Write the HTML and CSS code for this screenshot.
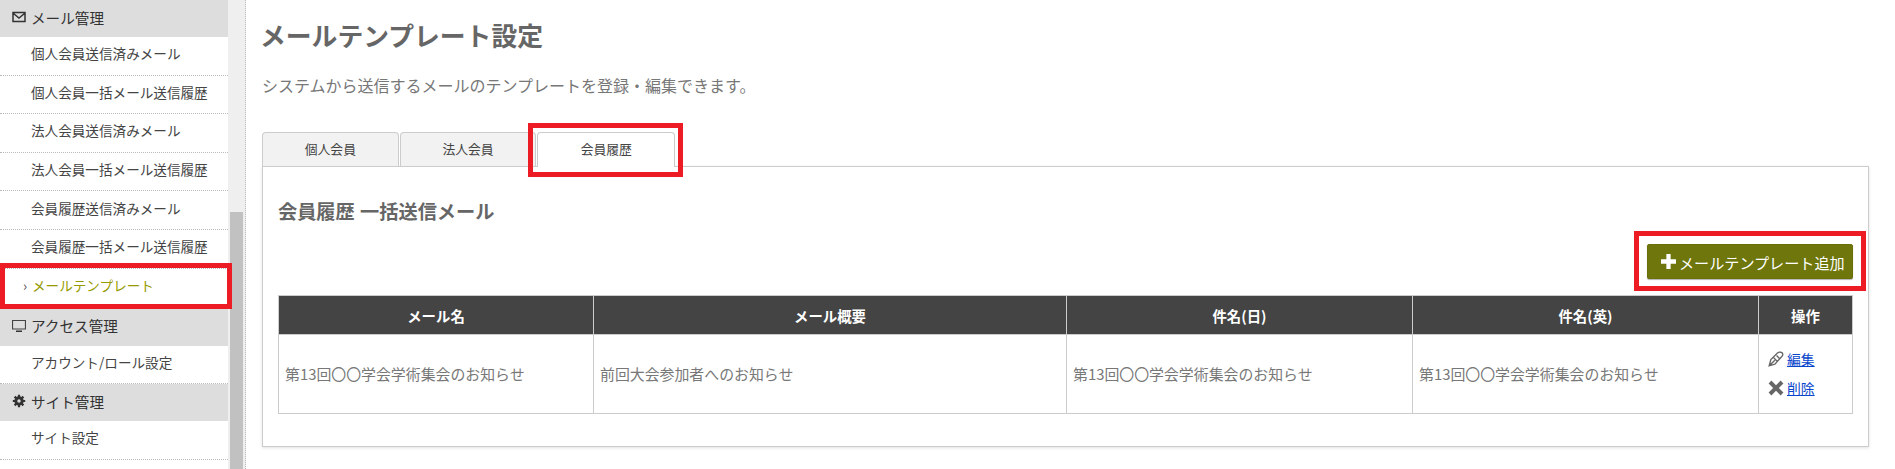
FILE: index.html
```html
<!DOCTYPE html>
<html lang="ja">
<head>
    <meta charset="UTF-8">
    <title>メールテンプレート設定</title>
    <link rel="stylesheet" href="styles.css">
</head>
<body>
    <div class="app">
        <div class="side">
            <div class="side-head">
                <svg class="side-icon" viewBox="0 0 14 14"><path d="M1 2.5h12v9H1z M1.500 3.500 7 8l5.500-4.500" fill="none" stroke="#333" stroke-width="1.5"/></svg>
                メール管理
            </div>
            <a class="side-item">個人会員送信済みメール</a>
            <a class="side-item">個人会員一括メール送信履歴</a>
            <a class="side-item">法人会員送信済みメール</a>
            <a class="side-item">法人会員一括メール送信履歴</a>
            <a class="side-item">会員履歴送信済みメール</a>
            <a class="side-item">会員履歴一括メール送信履歴</a>
            <a class="side-item side-active">
                <span class="side-arrow">›</span>メールテンプレート
                <span class="mark mark-side"></span>
            </a>
            <div class="side-head">
                <svg class="side-icon" viewBox="0 0 14 14"><path d="M.5 1.5h13V10H.5z" fill="none" stroke="#444" stroke-width="1.2"/><path d="M4 11.5h6V13H4z" fill="#333"/></svg>
                アクセス管理
            </div>
            <a class="side-item">アカウント/ロール設定</a>
            <div class="side-head">
                <svg class="side-icon" viewBox="0 0 14 14"><circle cx="7" cy="7" r="3.4" fill="none" stroke="#333" stroke-width="2.6"/><path d="M7 .8v12.4M.8 7h12.4M2.6 2.6l8.800 8.800M11.4 2.6l-8.800 8.800" stroke="#333" stroke-width="2.2"/><circle cx="7" cy="7" r="1.7" fill="#ddd"/></svg>
                サイト管理
            </div>
            <a class="side-item">サイト設定</a>
        </div>
        <div class="rail"><div class="rail-thumb"></div></div>

        <div class="main">
            <h1>メールテンプレート設定</h1>
            <p class="lead">システムから送信するメールのテンプレートを登録・編集できます。</p>

            <div class="tabs">
                <div class="tab">個人会員</div>
                <div class="tab">法人会員</div>
                <div class="tab tab-on">会員履歴<span class="mark mark-tab"></span></div>
            </div>

            <div class="panel">
                <h2>会員履歴 一括送信メール</h2>
                <div class="tools">
                    <button class="add-btn">
                        <svg class="plus" viewBox="0 0 14 14"><path d="M5 0h4v5h5v4H9v5H5V9H0V5h5z" fill="#fff"/></svg>
                        メールテンプレート追加
                        <span class="mark mark-btn"></span>
                    </button>
                </div>
                <table class="list">
                    <thead>
                        <tr>
                            <th class="col-name">メール名</th>
                            <th class="col-desc">メール概要</th>
                            <th class="col-ja">件名(日)</th>
                            <th class="col-en">件名(英)</th>
                            <th>操作</th>
                        </tr>
                    </thead>
                    <tbody>
                        <tr>
                            <td>第13回〇〇学会学術集会のお知らせ</td>
                            <td>前回大会参加者へのお知らせ</td>
                            <td>第13回〇〇学会学術集会のお知らせ</td>
                            <td>第13回〇〇学会学術集会のお知らせ</td>
                            <td class="ops">
                                <div class="op">
                                    <svg class="op-icon" viewBox="0 0 14 14"><path d="M1 13 2.500 7.500 8.500 1.500C10 .5 13 1 13 3c0 1-1 2-1.500 2.500L6 11.500z M1 13l5-5M5 6l3 3M7.500 4 10 6.500" fill="none" stroke="#666" stroke-width="1.2"/></svg>
                                    <a href="#">編集</a>
                                </div>
                                <div class="op">
                                    <svg class="op-icon" viewBox="0 0 14 14"><path d="M.5 3 3 .5l4 4 4-4L13.500 3l-4 4 4 4-2.500 2.500-4-4-4 4L.5 11l4-4z" fill="#666"/></svg>
                                    <a href="#">削除</a>
                                </div>
                            </td>
                        </tr>
                    </tbody>
                </table>
            </div>
        </div>
    </div>
</body>
</html>
```

FILE: styles.css
```css
* {
    box-sizing: border-box;
}
html, body {
    margin: 0;
    height: 469px;
    overflow: hidden;
}
body {
    font-family: "Noto Sans CJK JP", "Noto Sans", sans-serif;
    color: #666;
    background-color: #fff;
}
.app {
    display: flex;
    height: 469px;
}

/* sidebar */
.side {
    width: 228px;
    flex-shrink: 0;
    color: #444;
}
.side-head {
    display: flex;
    align-items: center;
    gap: 5px;
    height: 37px;
    padding: 0 0 3px 12px;
    background-color: #ddd;
    font-size: 14.6px;
    color: #333;
}
.side-icon {
    width: 14px;
    height: 14px;
    flex-shrink: 0;
}
.side-item {
    display: flex;
    align-items: center;
    height: 38.6px;
    padding: 0 0 5px 31px;
    font-size: 13.6px;
    border-bottom: 1px dotted #bbb;
}
.side-active {
    position: relative;
    height: 40px;
    padding: 0 0 7px 23px;
    color: #959a00;
    border-bottom: none;
}
.side-arrow {
    width: 9px;
    color: #555;
}
.rail {
    width: 18px;
    flex-shrink: 0;
    padding: 0 2px;
    background-color: #efefef;
    border-right: 1px dotted #bbb;
}
.rail-thumb {
    height: 257px;
    margin-top: 212px;
    background-color: #c1c1c1;
}

/* main */
.main {
    flex: 1;
    padding: 20px 26px 0 16px;
}
h1 {
    margin: 0 0 0 -2px;
    font-size: 25.8px;
    line-height: 30px;
    font-weight: bold;
}
.lead {
    margin: 24px 0 0;
    font-size: 16px;
    line-height: 22px;
    color: #777;
}
.tabs {
    display: flex;
    gap: 1px;
    margin-top: 36px;
    height: 34px;
}
.tab {
    position: relative;
    width: 136.7px;
    height: 34px;
    border: 1px solid #ccc;
    border-bottom: none;
    border-radius: 4px 4px 0 0;
    background-color: #f2f2f2;
    font-size: 12.8px;
    line-height: 32px;
    text-align: center;
    color: #444;
}
.tab-on {
    width: 137.7px;
    height: 35px;
    z-index: 1;
    background-color: #fff;
}
.panel {
    height: 281px;
    padding: 31px 15px 0;
    border: 1px solid #ccc;
    box-shadow: 0 1px 3px rgba(0, 0, 0, 0.12);
}
h2 {
    margin: 0;
    font-size: 19.2px;
    line-height: 27px;
    font-weight: bold;
    word-spacing: 1px;
}
.tools {
    display: flex;
    justify-content: flex-end;
    margin-top: 19px;
}
.add-btn {
    position: relative;
    display: flex;
    align-items: center;
    gap: 3px;
    height: 35px;
    width: 206px;
    padding: 0 0 0 13px;
    border: 1px solid #6b6f0a;
    border-radius: 2px;
    background-color: #6e760c;
    box-shadow: 0 1px 1px rgba(0, 0, 0, 0.3);
    font-family: inherit;
    font-size: 15.1px;
    color: #fff;
}
.plus {
    width: 15px;
    height: 15px;
}

/* annotation boxes */
.mark {
    position: absolute;
    border: 5px solid #ed1c24;
    pointer-events: none;
}
.mark-side {
    left: 0;
    right: -4px;
    top: -6px;
    bottom: 0;
}
.mark-tab {
    left: -10px;
    right: -9px;
    top: -10px;
    bottom: -10px;
}
.mark-btn {
    left: -14px;
    right: -14px;
    top: -14px;
    bottom: -13px;
}

/* table */
.list {
    width: 1575px;
    margin-top: 16px;
    border-collapse: collapse;
    table-layout: fixed;
    font-size: 14.9px;
}
.list th {
    height: 39px;
    padding: 0;
    border: 1px solid #ccc;
    background-color: #444;
    color: #fff;
    font-size: 14.4px;
    font-weight: bold;
}
.list td {
    height: 79px;
    padding: 0 6px 2px;
    border: 1px solid #ccc;
    color: #777;
}
.col-name {
    width: 315px;
}
.col-desc {
    width: 473px;
}
.col-ja, .col-en {
    width: 346px;
}
.list td.ops {
    padding: 0 9px 2px;
}
.op {
    display: flex;
    align-items: center;
    gap: 3px;
    height: 29px;
    font-size: 13.8px;
}
.op-icon {
    width: 16px;
    height: 16px;
}
.op a {
    color: #0645cc;
}
```
